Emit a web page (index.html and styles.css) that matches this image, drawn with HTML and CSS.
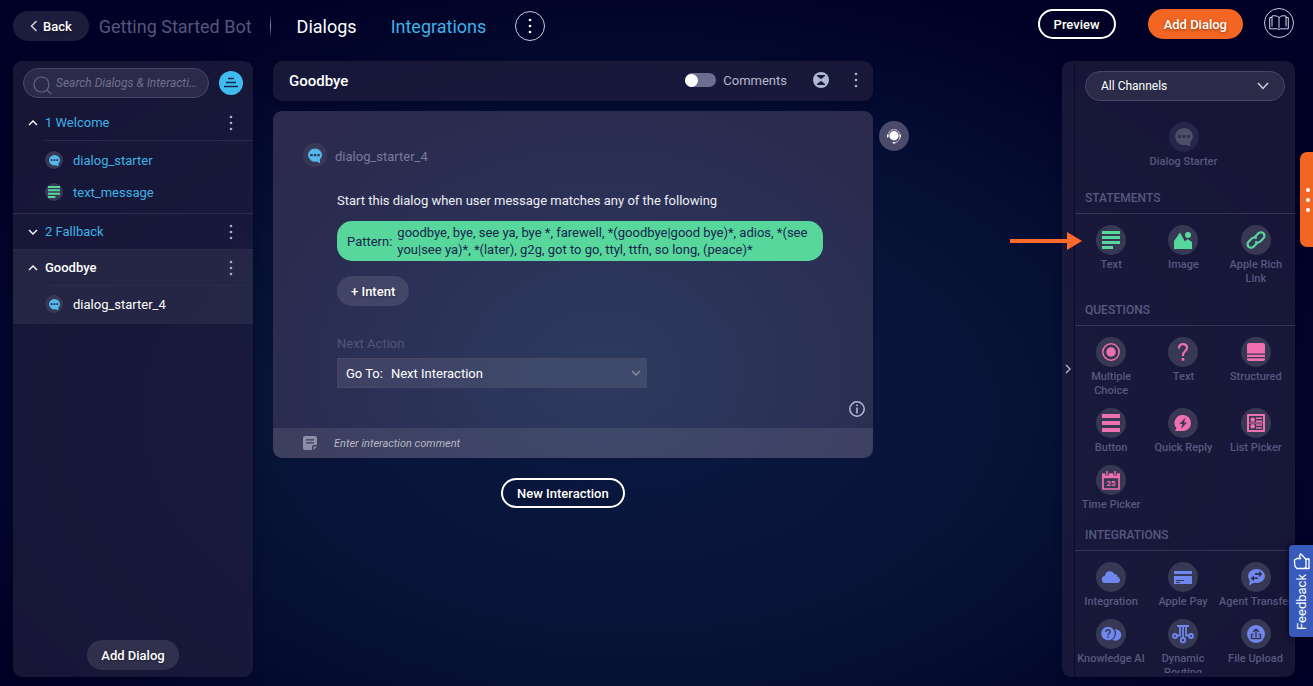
FILE: index.html
```html
<!DOCTYPE html>
<html lang="en">
<head>
<meta charset="utf-8">
<title>Getting Started Bot</title>
<link rel="stylesheet" href="styles.css">
</head>
<body>
<svg class="defs" aria-hidden="true">
  <symbol id="bubble" viewBox="0 0 18 18"><path fill="currentColor" d="M9 0a9 8.5 0 0 1 9 8.5c0 2.200-1 4-2.800 5.500L15.500 19l-4.500-2.200A9 8.500 0 1 1 9 0z"/><path fill="#2b3354" d="M3 7h3v3H3zm4.500 0h3v3h-3zM12 7h3v3h-3z"/></symbol>
  <symbol id="dots" viewBox="0 0 4 16"><circle cx="2" cy="2" r="1.300"/><circle cx="2" cy="8" r="1.300"/><circle cx="2" cy="14" r="1.300"/></symbol>
  <symbol id="up" viewBox="0 0 10 6"><path d="M1 5l4-4 4 4" fill="none" stroke="currentColor" stroke-width="1.400"/></symbol>
  <symbol id="down" viewBox="0 0 10 6"><path d="M1 1l4 4 4-4" fill="none" stroke="currentColor" stroke-width="1.400"/></symbol>
  <symbol id="lines" viewBox="0 0 18 18"><path fill="currentColor" d="M0 0h18v3H0zm0 5h18v3H0zm0 5h18v3H0zm0 5h11v3H0z"/></symbol>
</svg>

<header class="topbar">
  <button class="btn back"><svg width="8" height="12" viewBox="0 0 8 12"><path d="M6.500 1l-5 5 5 5" fill="none" stroke="#ccd" stroke-width="1.600"/></svg>Back</button>
  <h1 class="bot-name">Getting Started Bot</h1>
  <span class="divider"></span>
  <nav class="tabs">
    <a href="#dialogs" class="tab active">Dialogs</a>
    <a href="#integrations" class="tab">Integrations</a>
  </nav>
  <button class="round" aria-label="More"><svg width="4" height="16"><use href="#dots"/></svg></button>
  <div class="actions">
    <button class="btn outline">Preview</button>
    <button class="btn primary">Add Dialog</button>
    <button class="round book" aria-label="Documentation"><svg width="20" height="15" viewBox="0 0 20 15" fill="none" stroke="#d4d6e2" stroke-width="1"><path d="M10 2.500v10.500M10 2.500C8.500.8 5.500.4 3 1v10.500M10 2.500C11.500.8 14.500.4 17 1v10.500M3 2.500H.7v11.300H8.500l1.500.7 1.500-.7h7.800V2.500H17"/></svg></button>
  </div>
</header>

<main class="workspace">
  <aside class="panel sidebar">
    <div class="search-row">
      <label class="search"><svg width="19" height="19" viewBox="0 0 19 19" fill="none" stroke="#636482" stroke-width="1.200"><circle cx="8.500" cy="8.500" r="7.500"/><path d="M14 14l4.200 4.200"/></svg><input type="text" aria-label="Search" placeholder="Search Dialogs &amp; Interactions"></label>
      <button class="filter" aria-label="Collapse all"><svg width="16" height="12" viewBox="0 0 16 12" fill="none" stroke="#17264e" stroke-width="1.700"><path d="M5 1.500h6M3 5.500h10M1 9.500h14"/></svg></button>
    </div>
    <section class="dialog">
      <div class="dialog-head"><svg class="caret" width="10" height="6"><use href="#up"/></svg><a href="#welcome">1 Welcome</a><button class="kebab" aria-label="Welcome menu"><svg width="4" height="16"><use href="#dots"/></svg></button></div>
      <ul class="interactions">
        <li><span class="chip"><svg width="11" height="11"><use href="#bubble"/></svg></span><a href="#starter">dialog_starter</a></li>
        <li><span class="chip green"><svg width="12" height="12"><use href="#lines"/></svg></span><a href="#text">text_message</a></li>
      </ul>
    </section>
    <section class="dialog">
      <div class="dialog-head closed"><svg class="caret" width="10" height="6"><use href="#down"/></svg><a href="#fallback">2 Fallback</a><button class="kebab" aria-label="Fallback menu"><svg width="4" height="16"><use href="#dots"/></svg></button></div>
    </section>
    <section class="dialog selected">
      <div class="dialog-head"><svg class="caret" width="10" height="6"><use href="#up"/></svg><a href="#goodbye">Goodbye</a><button class="kebab" aria-label="Goodbye menu"><svg width="4" height="16"><use href="#dots"/></svg></button></div>
      <ul class="interactions">
        <li><span class="chip"><svg width="11" height="11"><use href="#bubble"/></svg></span><a href="#starter4">dialog_starter_4</a></li>
      </ul>
    </section>
    <button class="btn add">Add Dialog</button>
  </aside>

  <section class="editor">
    <div class="panel editor-head">
      <h2>Goodbye</h2>
      <label class="comments"><input type="checkbox" class="switch">Comments</label>
      <button class="plain collapse" aria-label="Collapse"><svg width="16" height="16" viewBox="0 0 16 16"><circle cx="8" cy="8" r="8" fill="#b0b7d0"/><path d="M4 3h8v1L8.700 6.800H7.300L4 4zM4 13h8v-1L8.700 9.200H7.300L4 12z" fill="#191b3d"/></svg></button>
      <button class="plain" aria-label="Dialog menu"><svg width="4" height="16"><use href="#dots"/></svg></button>
    </div>
    <article class="card">
      <div class="card-body">
        <div class="card-title"><span class="chip"><svg width="14" height="15"><use href="#bubble"/></svg></span><h3>dialog_starter_4</h3></div>
        <div class="content">
          <p class="hint">Start this dialog when user message matches any of the following</p>
          <div class="pattern"><span>Pattern:</span><span>goodbye, bye, see ya, bye *, farewell, *(goodbye|good bye)*, adios, *(see you|see ya)*, *(later), g2g, got to go, ttyl, ttfn, so long, (peace)*</span></div>
          <button class="btn intent">+ Intent</button>
          <p class="next">Next Action</p>
          <label class="goto"><span>Go To:</span><select><option>Next Interaction</option></select><svg width="10" height="6"><use href="#down"/></svg></label>
        </div>
        <button class="plain info" aria-label="Info"><svg width="16" height="16" viewBox="0 0 16 16"><circle cx="8" cy="8" r="7.200" fill="none" stroke="#b6bad0" stroke-width="1.500"/><path d="M7.200 3.500h1.600v1.600H7.200zm0 3h1.600v6H7.200z" fill="#b6bad0"/></svg></button>
      </div>
      <div class="comment">
        <svg width="14" height="14" viewBox="0 0 14 14"><path fill="#8d8fa8" d="M2 0h10a2 2 0 0 1 2 2v7h-3a2 2 0 0 0-2 2v3H2a2 2 0 0 1-2-2V2a2 2 0 0 1 2-2zM14 10.500L10.500 14v-2.500a1 1 0 0 1 1-1z"/><path fill="#3b3f62" d="M3 3.200h8v1.200H3zm0 3h8v1.200H3z"/></svg>
        <input type="text" aria-label="Interaction comment" placeholder="Enter interaction comment">
      </div>
    </article>
    <button class="btn outline new">New Interaction</button>
  </section>

  <button class="agent" aria-label="Agent"><svg width="14" height="15" viewBox="0 0 14 15"><circle cx="7" cy="6.800" r="4.700" fill="#fff"/><path d="M1.200 8V5.500C2 2 4.300.6 7 .6s5 1.400 5.800 4.900V9c-.5 2.500-2 4-5 4.500" fill="none" stroke="#fff" stroke-width=".8" stroke-dasharray="3 .6"/><path d="M0 5.500h1.200v3H0zm12.800 0H14v3h-1.200zM5.700 13h2.600v1.500H5.700z" fill="#fff"/></svg></button>

  <aside class="panel palette">
    <button class="plain handle" aria-label="Collapse panel"><svg width="6" height="10" viewBox="0 0 6 10"><path d="M1 1l4 4-4 4" fill="none" stroke="#b5b6c2" stroke-width="1.400"/></svg></button>
    <div class="palette-body">
      <div class="channels"><select aria-label="Channels"><option>All Channels</option></select><svg width="12" height="8" viewBox="0 0 12 8"><path d="M1 1l5 5.500L11 1" fill="none" stroke="#cfcfda" stroke-width="1.500"/></svg></div>
      <div class="grid start"><div class="tool wide muted"><span class="disc"><svg width="18" height="18"><use href="#bubble"/></svg></span>Dialog Starter</div></div>

      <h4>STATEMENTS</h4>
      <div class="grid green">
        <div class="tool"><span class="disc"><svg width="18" height="18"><use href="#lines"/></svg></span>Text</div>
        <div class="tool"><span class="disc"><svg width="18" height="18" viewBox="0 0 18 18" fill="currentColor"><path d="M0 10L6 1.500l5 9L13.500 8 18 11v7H0z"/><circle cx="14" cy="4" r="3"/></svg></span>Image</div>
        <div class="tool"><span class="disc"><svg width="20" height="20" viewBox="0 0 20 20" fill="none" stroke="currentColor" stroke-width="2.200"><g transform="rotate(-45 10 10)"><path d="M9 13H3.500a3.500 3.500 0 0 1 0-7H8a3.500 3.500 0 0 1 3.500 3.500"/><path d="M11 7h5.500a3.500 3.500 0 0 1 0 7H12a3.500 3.500 0 0 1-3.500-3.500"/></g></svg></span>Apple Rich Link</div>
      </div>

      <h4>QUESTIONS</h4>
      <div class="grid pink">
        <div class="tool"><span class="disc"><svg width="18" height="18" viewBox="0 0 18 18"><circle cx="9" cy="9" r="8.200" fill="none" stroke="currentColor" stroke-width="1.500"/><circle cx="9" cy="9" r="4.700" fill="currentColor"/></svg></span>Multiple Choice</div>
        <div class="tool"><span class="disc"><svg width="12" height="18" viewBox="0 0 12 18"><path d="M2 5.500V4.800C2 2.500 3.600 1.200 6 1.200s4 1.400 4 3.600c0 3.200-4 3.800-4 7.200v1" fill="none" stroke="currentColor" stroke-width="2.200"/><path d="M4.700 15h2.600v2.700H4.700z" fill="currentColor"/></svg></span>Text</div>
        <div class="tool"><span class="disc"><svg width="18" height="18" viewBox="0 0 18 18" fill="currentColor"><path d="M2 0h14a2 2 0 0 1 2 2v8.500H0V2a2 2 0 0 1 2-2zM0 11.800h18v2.200H0zM0 15.200h18V16a2 2 0 0 1-2 2H2a2 2 0 0 1-2-2z"/></svg></span>Structured</div>
        <div class="tool"><span class="disc"><svg width="18" height="18" viewBox="0 0 18 18" fill="currentColor"><path d="M0 0h18v4H0zm0 7h18v4H0zm0 7h18v4H0z"/></svg></span>Button</div>
        <div class="tool"><span class="disc"><svg width="18" height="18" viewBox="0 0 18 18"><path d="M9.500 1a8 8 0 1 1-1 16H1l1.500-2.800A8 8 0 0 1 9.500 1z" fill="currentColor"/><path d="M11.500 3.500L5.500 10h3L7 15l6-6.500h-3z" fill="#373854"/></svg></span>Quick Reply</div>
        <div class="tool"><span class="disc"><svg width="18" height="18" viewBox="0 0 18 18"><path d="M1 1h16v16H1z" fill="none" stroke="currentColor" stroke-width="2" stroke-linejoin="round"/><g fill="currentColor"><circle cx="5.700" cy="5.700" r="2.300"/><circle cx="5.700" cy="12.300" r="2.300"/><path d="M9 3.500h6V5H9zm0 3h6V8H9zm0 3.700h6v1.500H9zm0 3h6v1.500H9zM2 8.500h14v1H2z"/></g></svg></span>List Picker</div>
        <div class="tool"><span class="disc"><svg width="18" height="19" viewBox="0 0 18 19"><path d="M1 3.500h16v14.500H1z" fill="none" stroke="currentColor" stroke-width="1.700"/><path d="M0 2.500h18v4.700H0z" fill="currentColor"/><path d="M5 0v4.500M13 0v4.500" stroke="#373854" stroke-width="3.500"/><path d="M5 0v4M13 0v4" stroke="currentColor" stroke-width="1.400"/><text class="day" x="9" y="15" text-anchor="middle">25</text></svg></span>Time Picker</div>
      </div>

      <h4>INTEGRATIONS</h4>
      <div class="grid blue">
        <div class="tool"><span class="disc"><svg width="18" height="12" viewBox="0 0 18 12"><path fill="currentColor" d="M3.500 12a3.500 3.500 0 0 1-.5-7A5 5 0 0 1 12.500 3c2 0 3 1.300 3 3 1.500.3 2.500 1.400 2.500 3a3 3 0 0 1-3 3z"/></svg></span>Integration</div>
        <div class="tool"><span class="disc"><svg width="18" height="13" viewBox="0 0 18 13"><path fill="currentColor" d="M0 0h18v3H0zM0 5h18v8H0z"/><path d="M2 9.500h8M2 11.500h4" stroke="#373854"/></svg></span>Apple Pay</div>
        <div class="tool"><span class="disc"><svg width="18" height="17" viewBox="0 0 18 17"><ellipse cx="9.500" cy="7" rx="8.500" ry="7" fill="currentColor"/><path d="M3 10l-1 6.500L8 13z" fill="currentColor"/><path d="M8 4h4V2l3.500 3L12 8V6H8zM11 8.500H7V6.500L3.500 9.500 7 12v-2h4z" fill="#303454"/></svg></span><span class="one-line">Agent Transfer</span></div>
        <div class="tool"><span class="disc"><svg width="21" height="16" viewBox="0 0 21 16"><circle cx="14.500" cy="9" r="5.800" fill="currentColor"/><circle cx="7.500" cy="7.500" r="7.500" fill="#373854"/><circle cx="7" cy="7.500" r="6.800" fill="currentColor"/><path d="M4.800 6c0-1.600.9-2.300 2.200-2.300S9.200 4.500 9.200 5.800C9.200 7.500 7 7.500 7 9.200M7 10.200v1.600" fill="none" stroke="#373854" stroke-width="1.400"/></svg></span><span class="one-line">Knowledge AI</span></div>
        <div class="tool"><span class="disc"><svg width="22" height="20" viewBox="0 0 22 20" fill="none" stroke="currentColor" stroke-width="1.800"><path d="M5 2h12M8 2v9.500H5M11 2v12M14 2v9.500h3"/><circle cx="3" cy="12" r="2"/><circle cx="19" cy="12" r="2"/><circle cx="11" cy="16.200" r="2.200"/></svg></span>Dynamic Routing</div>
        <div class="tool"><span class="disc"><svg width="18" height="18" viewBox="0 0 18 18"><circle cx="9" cy="9" r="9" fill="currentColor"/><path d="M9 12V4.500M6 7l3-3 3 3M6.500 9.500H4.500v4h9v-4h-2" fill="none" stroke="#373854" stroke-width="1.400"/></svg></span>File Upload</div>
      </div>
    </div>
  </aside>
</main>

<svg class="pointer" width="72" height="18" viewBox="0 0 72 18" fill="#ff6a2b"><path d="M0 7h57V0l15 9-15 9v-7H0z"/></svg>
<button class="side-tab" aria-label="Open drawer"><svg width="4" height="24" viewBox="0 0 4 24" fill="#fff"><circle cx="2" cy="2" r="2"/><circle cx="2" cy="12" r="2"/><circle cx="2" cy="22" r="2"/></svg></button>
<button class="feedback"><svg width="17" height="17" viewBox="0 0 17 17" fill="none" stroke="#fff" stroke-width="1.300"><path d="M1.500 9V7l2.500-1.500h3.500L6.500 3 7.500 1l2 1.500 3.500 4V14l-1.500 1.500H4L2 13.500zM13 6h3v9.500h-4"/></svg><span>Feedback</span></button>
</body>
</html>
```

FILE: styles.css
```css
* { box-sizing: border-box; }
body {
  margin: 0;
  height: 100vh;
  overflow: hidden;
  display: flex;
  flex-direction: column;
  position: relative;
  font-family: Roboto, "Liberation Sans", sans-serif;
  font-size: 13px;
  color: #fff;
  background: radial-gradient(ellipse at 48% 60%, #0a1840 0%, #081338 38%, #040b30 58%, #010026 78%);
}
button, input, select { font: inherit; color: inherit; border: 0; background: none; padding: 0; margin: 0; outline: 0; }
button { cursor: pointer; display: flex; align-items: center; justify-content: center; }
select { appearance: none; }
h1, h2, h3, h4, p, ul { margin: 0; padding: 0; font-weight: 400; }
ul { list-style: none; }
a { color: inherit; text-decoration: none; }
svg { display: block; flex: none; overflow: visible; }
.defs { position: absolute; width: 0; height: 0; }

.btn { height: 30px; border-radius: 15px; font-weight: 500; padding: 0 16px; background: rgba(255, 255, 255, .11); text-shadow: 0 1px 3px rgba(0, 0, 0, .4); white-space: nowrap; }
.outline { border: 2px solid #fff; background: none; padding: 0 14px; }
.primary { background: #f26522; }
.round { width: 30px; height: 30px; border: 1px solid #c8cad8; border-radius: 50%; fill: #fff; }

.topbar { display: flex; align-items: center; height: 52px; padding: 0 19px 0 13px; flex: none; }
.back { gap: 5px; padding: 0 17px; }
.bot-name { font-size: 18px; color: #56577a; margin-left: 10px; white-space: nowrap; }
.divider { width: 1px; height: 24px; margin: 0 26px 0 18px; background: linear-gradient(transparent, #8a8ba5, transparent); }
.tabs { display: flex; gap: 34px; font-size: 18px; margin-right: 29px; }
.tab { color: #3db2e6; }
.tab.active { color: #fff; }
.actions { display: flex; align-items: center; margin-left: auto; padding-bottom: 4px; }
.actions .primary { margin: 0 21px 0 32px; }
.book { margin-bottom: 3px; }

.workspace { flex: 1; min-height: 0; display: flex; align-items: stretch; padding: 9px 18px 9px 13px; }
.panel { background: rgba(31, 29, 62, .75); border-radius: 9px; box-shadow: 0 2px 8px rgba(0, 0, 20, .35); }

.sidebar { width: 240px; flex: none; display: flex; flex-direction: column; }
.search-row { display: flex; align-items: center; gap: 10px; padding: 7px 10px; }
.search { flex: 1; min-width: 0; display: flex; align-items: center; gap: 4px; height: 30px; padding: 0 6px 0 9px; border: 1px solid #45466a; border-radius: 15px; background: rgba(255, 255, 255, .09); }
.search svg { margin-top: 4px; }
.search input { flex: 1; min-width: 0; font-size: 12px; font-style: italic; text-overflow: ellipsis; }
.search input::placeholder { color: #706f8d; }
.filter { width: 24px; height: 24px; border-radius: 50%; background: #3ebcf0; }
.dialog { border-bottom: 1px solid #2b2c4d; color: #3db2e6; }
.dialog-head { display: flex; align-items: center; height: 35px; padding: 0 12px 0 15px; }
.dialog-head + .interactions { border-top: 1px solid #2b2c4d; margin-left: 32px; }
.caret { color: #fff; margin-right: 7px; }
.kebab { margin-left: auto; width: 20px; height: 24px; fill: #a9abc4; }
.interactions { padding: 3px 0 5px; }
.interactions li { display: flex; align-items: center; gap: 10px; height: 32px; }
.chip { display: flex; align-items: center; justify-content: center; width: 18px; height: 18px; border-radius: 50%; background: #363856; color: #56b7ea; }
.green { color: #58d79d; }
.selected { background: rgba(255, 255, 255, .06); color: #fff; font-weight: 500; border-bottom: 0; }
.selected .interactions { padding: 2px 0 4px; }
.add { margin: auto auto 7px; padding: 0 14px; }

.editor { width: 600px; flex: 0 1 auto; margin-left: 20px; min-width: 0; }
.editor-head { display: flex; align-items: center; height: 40px; padding: 0 15px 2px 16px; }
.editor-head h2 { font-size: 15px; font-weight: 500; margin-right: auto; padding-top: 2px; }
.comments { display: flex; align-items: center; gap: 7px; color: #b7b8cc; }
.switch { appearance: none; width: 31px; height: 14px; border-radius: 7px; background: #6c6e90; display: flex; align-items: center; }
.switch::before { content: ""; width: 13px; height: 13px; border-radius: 50%; background: #fff; }
.plain { fill: #a9adc6; }
.collapse { margin: 0 25px 0 26px; }

.card { margin-top: 10px; border-radius: 9px; overflow: hidden; background: radial-gradient(ellipse at 55% 75%, #2d3a5f, #2b3157 45%, #2a2b4e 78%, #2d2a4e); }
.card-body { position: relative; padding: 32px 50px 40px 30px; }
.card-title { display: flex; align-items: center; gap: 8px; }
.card-title .chip { width: 24px; height: 24px; }
.card-title h3 { font-size: 13px; color: #787a9d; padding-top: 2px; }
.content { padding-left: 34px; }
.hint { line-height: 20px; padding: 24px 0 10px; color: #eceef5; }
.pattern { display: flex; align-items: center; gap: 5px; min-height: 40px; padding: 3px 10px; border-radius: 15px; background: #58d79d; color: #17264e; line-height: 17px; }
.intent { margin-top: 15px; padding: 0 14px; }
.next { line-height: 20px; margin: 28px 0 4px; color: #53557a; }
.goto { display: flex; align-items: center; gap: 8px; width: 310px; height: 30px; padding: 0 5px 0 8px; border: 1px solid #4a4766; background: rgba(255, 255, 255, .09); }
.goto select { flex: 1; }
.goto svg { color: #8d8f9f; }
.info { position: absolute; right: 8px; bottom: 11px; }
.comment { display: flex; align-items: center; gap: 17px; height: 30px; padding: 0 30px; background: rgba(255, 255, 255, .09); }
.comment input { flex: 1; font-size: 11px; font-style: italic; }
.comment input::placeholder { color: #b9b9c2; }
.new { margin: 20px auto 0 228px; }

.agent { flex: none; width: 30px; height: 30px; margin: 60px 0 0 6px; border-radius: 50%; background: #4a4a6b; }

.palette { flex: none; width: 233px; margin-left: auto; display: flex; overflow: hidden; }
.handle { width: 13px; border-right: 1px solid #0a0a2a; }
.palette-body { flex: 1; min-width: 0; overflow: hidden; padding-top: 10px; margin-bottom: 4px; }
.channels { display: flex; align-items: center; height: 30px; margin: 0 10px; padding: 0 15px; border: 1px solid #45466a; border-radius: 15px; background: rgba(255, 255, 255, .09); font-size: 12px; }
.channels select { flex: 1; }
.palette h4 { height: 30px; padding-left: 10px; line-height: 28px; font-size: 12px; font-weight: 500; color: #56587f; border-bottom: 1px solid #343656; }
.grid { display: grid; grid-template-columns: repeat(3, 1fr); padding: 11px 3px 0 0; }
.grid.start { padding-top: 21px; padding-bottom: 5px; }
.grid.pink { margin-bottom: -1px; }
.tool { display: flex; flex-direction: column; align-items: center; padding-bottom: 10px; gap: 3px; text-align: center; font-size: 11px; line-height: 14px; font-weight: 500; color: #56587f; }
.one-line { white-space: nowrap; }
.wide { grid-column: 1 / -1; }
.disc { display: flex; align-items: center; justify-content: center; width: 30px; height: 30px; border-radius: 50%; background: #373854; }
.green .disc { color: #58d79d; }
.pink .disc { color: #f06fb0; }
.blue .disc { color: #6f87ef; }
.muted .disc { color: #4e4e66; background: #25264a; }
.day { font-size: 8px; font-weight: 700; fill: currentColor; }

.pointer { position: absolute; left: 1010px; top: 232px; }
.side-tab { position: absolute; right: 0; top: 152px; width: 13px; height: 95px; border-radius: 7px 0 0 7px; background: #f26522; padding-left: 3px; }
.feedback { position: absolute; right: 0; top: 545px; width: 24px; height: 92px; flex-direction: column; gap: 4px; border-radius: 4px 0 0 4px; background: #385bbb; box-shadow: 0 0 6px #001; }
.feedback span { writing-mode: vertical-rl; transform: rotate(180deg); }
```
